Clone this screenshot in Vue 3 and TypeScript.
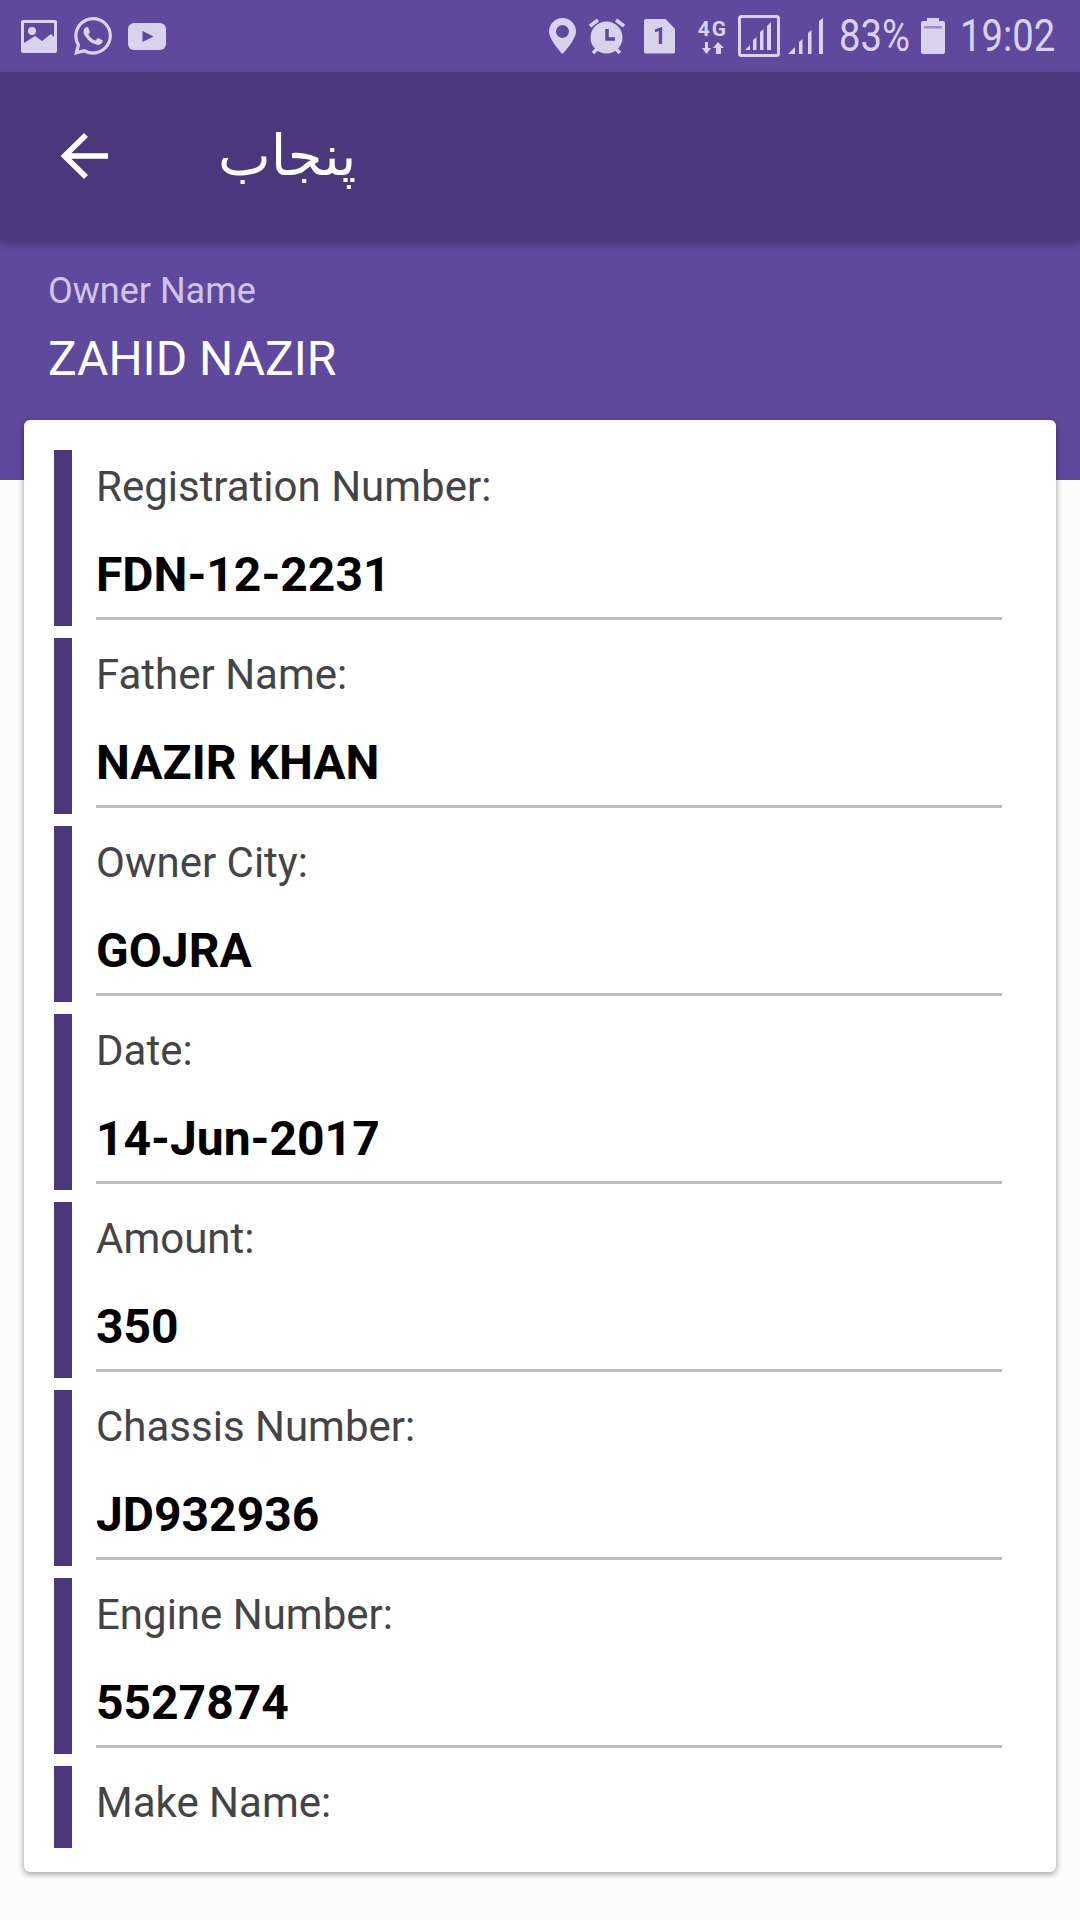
<script setup lang="ts">
interface Row {
  label: string;
  value?: string;
}
const rows: Row[] = [
  { label: "Registration Number:", value: "FDN-12-2231" },
  { label: "Father Name:", value: "NAZIR KHAN" },
  { label: "Owner City:", value: "GOJRA" },
  { label: "Date:", value: "14-Jun-2017" },
  { label: "Amount:", value: "350" },
  { label: "Chassis Number:", value: "JD932936" },
  { label: "Engine Number:", value: "5527874" },
  { label: "Make Name:" },
];
</script>

<template>
  <div class="page">
    <header class="status">
      <div class="status-left">
        <svg class="ic-image" width="36" height="33" viewBox="0 0 36 33">
          <rect width="36" height="33" rx="2" fill="#d9d2ec" />
          <rect x="3" y="3" width="30" height="24" fill="#5f499c" />
          <circle cx="11" cy="11" r="4" fill="#d9d2ec" />
          <path d="M3 23l11-7 7 5 9-7 3 3v16H3z" fill="#d9d2ec" />
        </svg>
        <svg class="ic-wa" width="38" height="38" viewBox="0 0 24 24">
          <path fill="#d9d2ec" d="M17.472 14.382c-.297-.149-1.758-.867-2.03-.967-.273-.099-.471-.148-.67.15-.197.297-.767.966-.94 1.164-.173.199-.347.223-.644.075-.297-.15-1.255-.463-2.39-1.475-.883-.788-1.48-1.761-1.653-2.059-.173-.297-.018-.458.13-.606.134-.133.298-.347.446-.52.149-.174.198-.298.298-.497.099-.198.05-.371-.025-.52-.075-.149-.669-1.612-.916-2.207-.242-.579-.487-.5-.669-.51-.173-.008-.371-.01-.57-.01-.198 0-.52.074-.792.372-.272.297-1.04 1.016-1.04 2.479 0 1.462 1.065 2.875 1.213 3.074.149.198 2.096 3.2 5.077 4.487.709.306 1.262.489 1.694.625.712.227 1.36.195 1.871.118.571-.085 1.758-.719 2.006-1.413.248-.694.248-1.289.173-1.413-.074-.124-.272-.198-.57-.347m-5.421 7.403h-.004a9.87 9.87 0 01-5.031-1.378l-.361-.214-3.741.982.998-3.648-.235-.374a9.86 9.86 0 01-1.51-5.26c.001-5.45 4.436-9.884 9.888-9.884 2.64 0 5.122 1.03 6.988 2.898a9.825 9.825 0 012.893 6.994c-.003 5.45-4.437 9.884-9.885 9.884m8.413-18.297A11.815 11.815 0 0012.05 0C5.495 0 .16 5.335.157 11.892c0 2.096.547 4.142 1.588 5.945L.057 24l6.305-1.654a11.882 11.882 0 005.683 1.448h.005c6.554 0 11.89-5.335 11.893-11.893a11.821 11.821 0 00-3.48-8.413z" />
        </svg>
        <svg class="ic-yt" width="38" height="27" viewBox="0 0 38 27">
          <rect width="38" height="27" rx="6" fill="#d9d2ec" />
          <path d="M14.5 8l11 5.5-11 5.5z" fill="#5f499c" />
        </svg>
      </div>
      <div class="status-right">
        <svg class="ic-pin" width="27" height="36" viewBox="0 0 27 36">
          <path fill="#d9d2ec" fill-rule="evenodd" d="M13.5 0C6 0 0 6 0 13.5 0 22 13.5 36 13.5 36S27 22 27 13.5C27 6 21 0 13.5 0zm0 7a6.500 6.500 0 110 13 6.500 6.500 0 010-13z" />
        </svg>
        <svg class="ic-alarm" width="36" height="37" viewBox="0 0 36 37">
          <circle cx="17.5" cy="19.500" r="16" fill="#d9d2ec" />
          <path d="M18 11v10h8" fill="none" stroke="#5f499c" stroke-width="3.500" />
          <path d="M1 8l8-6M35 8l-8-6M4 35l4-4M31 35l-4-4" stroke="#d9d2ec" stroke-width="3.500" fill="none" />
        </svg>
        <div class="sim">1</div>
        <div class="net">
          <span class="net-text">4G</span>
          <svg width="22" height="12" viewBox="0 0 22 12">
            <path fill="#d9d2ec" d="M3 0h3v6h3L4.500 12 0 6h3zM17 12h-3V6h-3l5-6 6 6h-3v6z" />
          </svg>
        </div>
        <svg class="ic-box" width="42" height="42" viewBox="0 0 42 42">
          <rect x="1.500" y="1.500" width="39" height="39" rx="2" fill="none" stroke="#d9d2ec" stroke-width="3" />
          <path fill="#d9d2ec" d="M7 35l5-5v5zM15 35V25l3.500-3v13zM22 35V17l3.500-3v21zM29 35V11l4-4v28z" />
        </svg>
        <svg class="ic-signal" width="35" height="36" viewBox="0 0 35 36">
          <path fill="#d9d2ec" d="M0 36l7-7v7zM11 36V24l3.500-3v15zM20 36V15l3.500-3v24zM31 36V3l4-3v36z" />
        </svg>
        <span class="cond pct">83%</span>
        <svg class="ic-batt" width="24" height="36" viewBox="0 0 24 36">
          <path fill="#d9d2ec" d="M6 0h12v3h4a2 2 0 012 2v29a2 2 0 01-2 2H2a2 2 0 01-2-2V5a2 2 0 012-2h4z" />
          <rect x="3" y="8" width="18" height="2.500" fill="#9c8fc4" />
        </svg>
        <span class="cond time">19:02</span>
      </div>
    </header>

    <div class="toolbar">
      <svg class="back" width="48" height="48" viewBox="0 0 48 48">
        <path d="M48 24H4M26 3L4.500 24 26 45" fill="none" stroke="#fff" stroke-width="5.500" />
      </svg>
      <h1 class="title">پنجاب</h1>
    </div>

    <section class="hero">
      <div class="owner-label">Owner Name</div>
      <div class="owner-name">ZAHID NAZIR</div>
    </section>

    <main class="card">
      <div v-for="row in rows" :key="row.label" class="row">
        <div class="accent"></div>
        <div class="body" :class="{ last: !row.value }">
          <div class="label">{{ row.label }}</div>
          <template v-if="row.value">
            <div class="value">{{ row.value }}</div>
            <div class="divider"></div>
          </template>
        </div>
      </div>
    </main>
  </div>
</template>

<style>
html,
body {
  margin: 0;
  background: #fcfcfc;
}
</style>

<style scoped>
.page {
  width: 1080px;
  height: 1920px;
  overflow: hidden;
  background: #fcfcfc;
  font-family: Roboto, "Liberation Sans", sans-serif;
}
.status {
  height: 72px;
  background: #5f499c;
  display: flex;
  justify-content: space-between;
  align-items: center;
  padding: 0 25px 0 21px;
  box-sizing: border-box;
  color: #d9d2ec;
}
.status-left,
.status-right {
  display: flex;
  align-items: center;
}
.ic-wa {
  margin-left: 17px;
}
.ic-yt {
  margin-left: 16px;
}
.ic-alarm {
  margin-left: 13px;
}
.sim {
  width: 31px;
  height: 35px;
  margin-left: 19px;
  background: #d9d2ec;
  color: #5f499c;
  border-radius: 2px;
  clip-path: polygon(0 0, 68% 0, 100% 30%, 100% 100%, 0 100%);
  font-size: 23px;
  font-weight: 700;
  line-height: 35px;
  text-align: center;
}
.net {
  width: 28px;
  margin-left: 24px;
  display: flex;
  flex-direction: column;
  align-items: center;
  gap: 3px;
}
.net-text {
  font-size: 21px;
  font-weight: 700;
  letter-spacing: 2px;
  line-height: 20px;
}
.ic-box {
  margin-left: 11px;
}
.ic-signal {
  margin-left: 8px;
}
.cond {
  display: inline-block;
  font-size: 45px;
  font-weight: 400;
  line-height: 52px;
  transform: scaleX(0.85);
}
.pct {
  width: 70px;
  margin-left: 16px;
  transform-origin: left center;
}
.ic-batt {
  margin-left: 12px;
}
.time {
  width: 95px;
  margin-left: 15px;
  transform-origin: left center;
}
.toolbar {
  position: relative;
  height: 168px;
  background: #4b387c;
  display: flex;
  align-items: center;
  padding-left: 60px;
  box-shadow: 0 4px 10px rgba(0, 0, 0, 0.3);
}
.title {
  margin: 0 0 0 110px;
  font-family: "DejaVu Sans", sans-serif;
  font-size: 56px;
  font-weight: 400;
  color: #fff;
  line-height: 60px;
}
.hero {
  height: 240px;
  background: #5f499c;
  padding: 31px 0 0 48px;
  box-sizing: border-box;
}
.owner-label {
  font-size: 36px;
  line-height: 40px;
  color: #d1c4e9;
}
.owner-name {
  margin-top: 20px;
  font-size: 48px;
  line-height: 56px;
  color: #fff;
}
.card {
  position: relative;
  margin: -60px 24px 0;
  padding: 30px 54px 24px 30px;
  background: #fff;
  border-radius: 6px;
  box-shadow: 0 2px 6px rgba(0, 0, 0, 0.4);
  display: flex;
  flex-direction: column;
  gap: 12px;
}
.row {
  display: flex;
  gap: 24px;
}
.accent {
  width: 18px;
  background: #4b387c;
}
.body {
  flex: 1;
  padding: 13px 0 6px;
}
.body.last {
  padding-bottom: 21px;
}
.label {
  font-size: 42px;
  line-height: 48px;
  color: #444;
}
.value {
  margin-top: 38px;
  font-size: 48px;
  font-weight: 700;
  line-height: 52px;
  color: #000;
}
.divider {
  height: 3px;
  margin-top: 16px;
  background: #bdbdbd;
}
</style>
